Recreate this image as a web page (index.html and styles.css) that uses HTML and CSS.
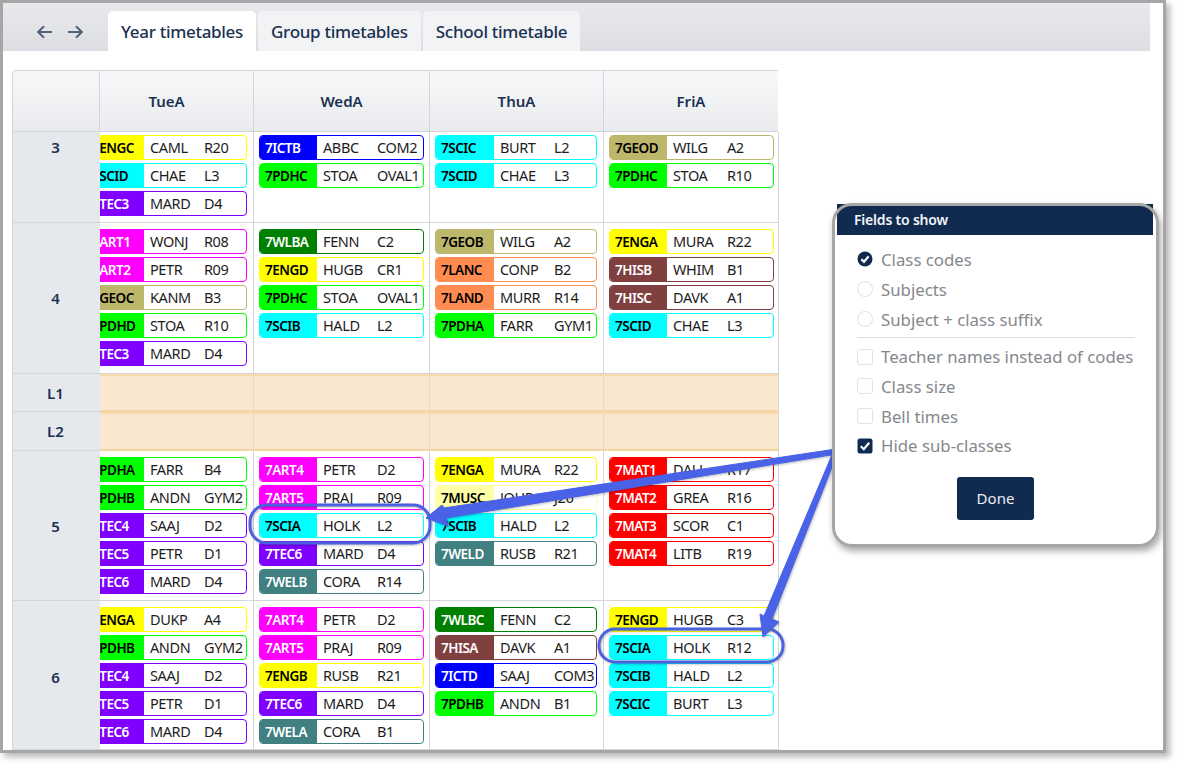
FILE: index.html
```html
<!DOCTYPE html>
<html lang="en">
<head>
<meta charset="utf-8">
<title>Year timetables</title>
<link rel="stylesheet" href="styles.css">
</head>
<body>
<div class="window">
  <div class="tabbar">
    <div class="navs">
      <svg class="nav-icon" viewBox="0 0 16 14"><path d="M15 7H1.5M7 1.2 1.2 7 7 12.8"/></svg>
      <svg class="nav-icon" viewBox="0 0 16 14"><path d="M1 7h13.5M9 1.2 14.8 7 9 12.8"/></svg>
    </div>
    <div class="tab active">Year timetables</div>
    <div class="tab">Group timetables</div>
    <div class="tab">School timetable</div>
  </div>
  <div class="table">
    <div class="head corner"></div>
    <div class="head first">TueA</div>
    <div class="head">WedA</div>
    <div class="head">ThuA</div>
    <div class="head last">FriA</div>

    <div class="rowhead top">3</div>
    <div class="cell tue short">
      <div class="chip yel"><b>7ENGC</b><span>CAML</span><span>R20</span></div>
      <div class="chip cya"><b>7SCID</b><span>CHAE</span><span>L3</span></div>
      <div class="chip pur"><b>7TEC3</b><span>MARD</span><span>D4</span></div>
    </div>
    <div class="cell wed short">
      <div class="chip blu"><b>7ICTB</b><span>ABBC</span><span>COM2</span></div>
      <div class="chip gre"><b>7PDHC</b><span>STOA</span><span>OVAL1</span></div>
    </div>
    <div class="cell thu short">
      <div class="chip cya"><b>7SCIC</b><span>BURT</span><span>L2</span></div>
      <div class="chip cya"><b>7SCID</b><span>CHAE</span><span>L3</span></div>
    </div>
    <div class="cell fri short">
      <div class="chip kha"><b>7GEOD</b><span>WILG</span><span>A2</span></div>
      <div class="chip gre"><b>7PDHC</b><span>STOA</span><span>R10</span></div>
    </div>

    <div class="rowhead">4</div>
    <div class="cell tue">
      <div class="chip mag"><b>7ART1</b><span>WONJ</span><span>R08</span></div>
      <div class="chip mag"><b>7ART2</b><span>PETR</span><span>R09</span></div>
      <div class="chip kha"><b>7GEOC</b><span>KANM</span><span>B3</span></div>
      <div class="chip gre"><b>7PDHD</b><span>STOA</span><span>R10</span></div>
      <div class="chip pur"><b>7TEC3</b><span>MARD</span><span>D4</span></div>
    </div>
    <div class="cell wed">
      <div class="chip dgr"><b>7WLBA</b><span>FENN</span><span>C2</span></div>
      <div class="chip yel"><b>7ENGD</b><span>HUGB</span><span>CR1</span></div>
      <div class="chip gre"><b>7PDHC</b><span>STOA</span><span>OVAL1</span></div>
      <div class="chip cya"><b>7SCIB</b><span>HALD</span><span>L2</span></div>
    </div>
    <div class="cell thu">
      <div class="chip kha"><b>7GEOB</b><span>WILG</span><span>A2</span></div>
      <div class="chip ora"><b>7LANC</b><span>CONP</span><span>B2</span></div>
      <div class="chip ora"><b>7LAND</b><span>MURR</span><span>R14</span></div>
      <div class="chip gre"><b>7PDHA</b><span>FARR</span><span>GYM1</span></div>
    </div>
    <div class="cell fri">
      <div class="chip yel"><b>7ENGA</b><span>MURA</span><span>R22</span></div>
      <div class="chip bro"><b>7HISB</b><span>WHIM</span><span>B1</span></div>
      <div class="chip bro"><b>7HISC</b><span>DAVK</span><span>A1</span></div>
      <div class="chip cya"><b>7SCID</b><span>CHAE</span><span>L3</span></div>
    </div>

    <div class="rowhead">L1</div>
    <div class="break"></div><div class="break"></div><div class="break"></div><div class="break"></div>
    <div class="rowhead">L2</div>
    <div class="break"></div><div class="break"></div><div class="break"></div><div class="break"></div>

    <div class="rowhead">5</div>
    <div class="cell tue">
      <div class="chip gre"><b>7PDHA</b><span>FARR</span><span>B4</span></div>
      <div class="chip gre"><b>7PDHB</b><span>ANDN</span><span>GYM2</span></div>
      <div class="chip pur"><b>7TEC4</b><span>SAAJ</span><span>D2</span></div>
      <div class="chip pur"><b>7TEC5</b><span>PETR</span><span>D1</span></div>
      <div class="chip pur"><b>7TEC6</b><span>MARD</span><span>D4</span></div>
    </div>
    <div class="cell wed">
      <div class="chip mag"><b>7ART4</b><span>PETR</span><span>D2</span></div>
      <div class="chip mag"><b>7ART5</b><span>PRAJ</span><span>R09</span></div>
      <div class="chip cya"><b>7SCIA</b><span>HOLK</span><span>L2</span></div>
      <div class="chip pur"><b>7TEC6</b><span>MARD</span><span>D4</span></div>
      <div class="chip tea"><b>7WELB</b><span>CORA</span><span>R14</span></div>
    </div>
    <div class="cell thu">
      <div class="chip yel"><b>7ENGA</b><span>MURA</span><span>R22</span></div>
      <div class="chip lye"><b>7MUSC</b><span>JOHR</span><span>J26</span></div>
      <div class="chip cya"><b>7SCIB</b><span>HALD</span><span>L2</span></div>
      <div class="chip tea"><b>7WELD</b><span>RUSB</span><span>R21</span></div>
    </div>
    <div class="cell fri">
      <div class="chip red"><b>7MAT1</b><span>DALL</span><span>R17</span></div>
      <div class="chip red"><b>7MAT2</b><span>GREA</span><span>R16</span></div>
      <div class="chip red"><b>7MAT3</b><span>SCOR</span><span>C1</span></div>
      <div class="chip red"><b>7MAT4</b><span>LITB</span><span>R19</span></div>
    </div>

    <div class="rowhead low">6</div>
    <div class="cell tue">
      <div class="chip yel"><b>7ENGA</b><span>DUKP</span><span>A4</span></div>
      <div class="chip gre"><b>7PDHB</b><span>ANDN</span><span>GYM2</span></div>
      <div class="chip pur"><b>7TEC4</b><span>SAAJ</span><span>D2</span></div>
      <div class="chip pur"><b>7TEC5</b><span>PETR</span><span>D1</span></div>
      <div class="chip pur"><b>7TEC6</b><span>MARD</span><span>D4</span></div>
    </div>
    <div class="cell wed">
      <div class="chip mag"><b>7ART4</b><span>PETR</span><span>D2</span></div>
      <div class="chip mag"><b>7ART5</b><span>PRAJ</span><span>R09</span></div>
      <div class="chip yel"><b>7ENGB</b><span>RUSB</span><span>R21</span></div>
      <div class="chip pur"><b>7TEC6</b><span>MARD</span><span>D4</span></div>
      <div class="chip tea"><b>7WELA</b><span>CORA</span><span>B1</span></div>
    </div>
    <div class="cell thu">
      <div class="chip dgr"><b>7WLBC</b><span>FENN</span><span>C2</span></div>
      <div class="chip bro"><b>7HISA</b><span>DAVK</span><span>A1</span></div>
      <div class="chip blu"><b>7ICTD</b><span>SAAJ</span><span>COM3</span></div>
      <div class="chip gre"><b>7PDHB</b><span>ANDN</span><span>B1</span></div>
    </div>
    <div class="cell fri">
      <div class="chip yel"><b>7ENGD</b><span>HUGB</span><span>C3</span></div>
      <div class="chip cya"><b>7SCIA</b><span>HOLK</span><span>R12</span></div>
      <div class="chip cya"><b>7SCIB</b><span>HALD</span><span>L2</span></div>
      <div class="chip cya"><b>7SCIC</b><span>BURT</span><span>L3</span></div>
    </div>
  </div>

  <svg class="marks" viewBox="0 0 1160 747">
    <g transform="translate(-3 -3)">
      <path class="arrow" d="M836 449 837 454 446 518 426 518 442 505 444 508Z"/>
      <path class="arrow" d="M446 517 448 526 426 518Z"/>
      <path class="arrow" d="M834 450 838 452 772 619 779 622 763 637 760 614 764 616Z"/>
      <rect class="ring" x="250" y="505" width="180" height="38" rx="17"/>
      <rect class="ring" x="599" y="629" width="184" height="33" rx="16"/>
    </g>
  </svg>

  <div class="panel">
    <div class="panel-title">Fields to show</div>
    <div class="panel-body">
      <div class="opt"><svg class="box" viewBox="0 0 16 16"><circle class="on" cx="8" cy="8" r="7.5"/><path class="tick" d="M4.4 8.2 7 10.8 11.6 5.4"/></svg>Class codes</div>
      <div class="opt"><svg class="box" viewBox="0 0 16 16"><circle class="off" cx="8" cy="8" r="7.5"/></svg>Subjects</div>
      <div class="opt"><svg class="box" viewBox="0 0 16 16"><circle class="off" cx="8" cy="8" r="7.5"/></svg>Subject + class suffix</div>
      <div class="rule"></div>
      <div class="opt alt"><svg class="box" viewBox="0 0 16 16"><rect class="off" x=".5" y=".5" width="15" height="15" rx="2.5"/></svg>Teacher names instead of codes</div>
      <div class="opt alt"><svg class="box" viewBox="0 0 16 16"><rect class="off" x=".5" y=".5" width="15" height="15" rx="2.5"/></svg>Class size</div>
      <div class="opt alt"><svg class="box" viewBox="0 0 16 16"><rect class="off" x=".5" y=".5" width="15" height="15" rx="2.5"/></svg>Bell times</div>
      <div class="opt alt"><svg class="box" viewBox="0 0 16 16"><rect class="on" x=".5" y=".5" width="15" height="15" rx="2.5"/><path class="tick" d="M3.8 8.2 6.8 11.2 12.2 4.8"/></svg>Hide sub-classes</div>
      <div class="done">Done</div>
    </div>
  </div>
</div>
</body>
</html>
```
FILE: styles.css
```css
* { box-sizing: border-box; }
html, body { margin: 0; padding: 0; background: #fff; }
body { font-family: "Noto Sans", "Open Sans", sans-serif; height: 765px; overflow: hidden; }

.window {
  position: relative;
  width: 1166px;
  height: 753px;
  border: 3px solid #a6a6a6;
  background: #fff;
  overflow: hidden;
  box-shadow: 4px 4px 6px rgba(0, 0, 0, .28);
}

.tabbar {
  display: flex;
  align-items: flex-end;
  width: 1147px;
  height: 48px;
  background: linear-gradient(#e7e9ec, #dcdee3);
  gap: 2px;
}
.navs {
  display: flex;
  align-self: center;
  gap: 14px;
  width: 103px;
  padding: 9px 0 0 34px;
}
.nav-icon { width: 16px; height: 14px; fill: none; stroke: #4f617b; stroke-width: 2; }
.tab {
  height: 40px;
  padding: 0 13px;
  display: flex;
  align-items: center;
  background: #f1f3f5;
  border-radius: 5px 5px 0 0;
  color: #1b3152;
  font-size: 17px;
  font-weight: 500;
  letter-spacing: -0.3px;
}
.tab.active { background: #fff; }

.table {
  display: grid;
  grid-template-columns: 88px 154px 176px 174px 175px;
  grid-template-rows: 62px 91px 151px 38px 39px 150px 149px;
  margin: 19px 0 0 9px;
  width: 767px;
}
.head {
  display: flex;
  align-items: center;
  justify-content: center;
  background: linear-gradient(#f7f8f9, #e9ebee);
  border-top: 1px solid #d3d5d8;
  border-right: 1px solid #d3d5d8;
  border-bottom: 1px solid #d3d5d8;
  color: #1b3152;
  font-size: 15px;
  font-weight: 600;
}
.head.corner { border-left: 1px solid #d3d5d8; border-top-left-radius: 4px; }
.head.first { padding-right: 20px; }
.head.last { border-right: 0; margin-right: 1px; }

.rowhead {
  display: flex;
  align-items: center;
  justify-content: center;
  padding-right: 2px;
  background: #e5e8ed;
  border-left: 1px solid #d3d5d8;
  border-bottom: 1px solid #d3d5d8;
  color: #1b3152;
  font-size: 15px;
  font-weight: 600;
}
.rowhead.top { align-items: flex-start; padding-top: 5px; }
.rowhead.low { padding-top: 3px; }

.cell {
  display: flex;
  flex-direction: column;
  gap: 3px;
  padding-top: 6px;
  overflow: hidden;
  border-right: 1px solid #d3d5d8;
  border-bottom: 1px solid #d3d5d8;
}
.tue { padding-right: 6px; }
.tue .chip { margin-left: -14px; }
.wed { padding: 6px 5px 0; }
.thu { padding: 6px 6px 0 5px; }
.fri { padding: 6px 4px 0 5px; }
.cell.short { padding-top: 3px; }

.break {
  background: #f9e7cf;
  border-top: 2px solid #f8d9ae;
  border-bottom: 2px solid #f8d4a2;
  border-right: 1px solid #e3d9cb;
}

.chip {
  display: flex;
  flex: 0 0 25px;
  align-items: center;
  border: 1px solid var(--c);
  border-radius: 4px;
  color: #1c1c1c;
  font-size: 14.5px;
  letter-spacing: -0.4px;
  white-space: nowrap;
  background: #fff;
  overflow: hidden;
}
.chip span { padding-bottom: 2px; }
.chip b {
  flex: 0 0 57px;
  align-self: stretch;
  display: flex;
  align-items: center;
  padding-left: 5px;
  background: var(--c);
  color: var(--t, #000);
  font-size: 13.5px;
  font-weight: 600;
  letter-spacing: -0.5px;
}
.thu .chip b { flex-basis: 58px; }
.chip span:nth-child(2) { flex: 0 0 54px; margin-left: 6px; }

.yel { --c: #ffff00; }
.lye { --c: #ffffa6; }
.cya { --c: #00ffff; }
.pur { --c: #8000ff; --t: #fff; }
.mag { --c: #ff00ff; --t: #fff; }
.gre { --c: #00ff00; }
.blu { --c: #0000ff; --t: #fff; }
.dgr { --c: #008000; --t: #fff; }
.kha { --c: #bdb76b; }
.ora { --c: #ff8c50; }
.bro { --c: #804040; --t: #fff; }
.tea { --c: #408080; --t: #fff; }
.red { --c: #ff0000; --t: #fff; }

.marks {
  position: absolute;
  left: 0;
  top: 0;
  width: 1160px;
  height: 747px;
  pointer-events: none;
  filter: drop-shadow(1px 1px 1px rgba(0, 0, 0, .25));
}
.arrow { fill: #4a62e8; stroke: #4a62e8; stroke-width: 1; stroke-linejoin: round; }
.ring { fill: none; stroke: #4a62e0; stroke-width: 3; }

.panel {
  position: absolute;
  left: 829px;
  top: 200px;
  width: 327px;
  height: 344px;
  padding: 1px 3px 3px;
  border-radius: 20px;
  background: #fff;
  box-shadow: 2px 4px 7px rgba(0, 0, 0, .35);
}
.panel::after {
  content: "";
  position: absolute;
  inset: 0;
  border: 3px solid #a6a6a6;
  border-radius: 20px;
  pointer-events: none;
}
.panel-title {
  height: 31px;
  margin: 0 3px 0 2px;
  padding: 0 0 0 17px;
  display: flex;
  align-items: center;
  background: #112b50;
  color: #f2f4f7;
  font-size: 14px;
  font-weight: 600;
  letter-spacing: -0.2px;
}
.panel-body {
  display: flex;
  flex-direction: column;
  padding: 9px 21px 0 22px;
  color: #85888d;
  font-size: 16.8px;
}
.opt { display: flex; align-items: center; gap: 8px; height: 30px; white-space: nowrap; }
.opt.alt { height: 29.67px; }
.box { width: 16px; height: 16px; flex: none; }
.box .on { fill: #112b50; }
.box .off { fill: #fff; stroke: #dfe2e6; }
.tick { fill: none; stroke: #fff; stroke-width: 2.2; }
.rule { height: 1px; margin: 3px 0 4px; background: #dcdfe3; }
.done {
  align-self: center;
  margin: 16px 0 0 -1px;
  width: 77px;
  height: 43px;
  display: flex;
  align-items: center;
  justify-content: center;
  background: #112b50;
  border-radius: 3px;
  color: #e9ecf0;
  font-size: 15px;
}
```
